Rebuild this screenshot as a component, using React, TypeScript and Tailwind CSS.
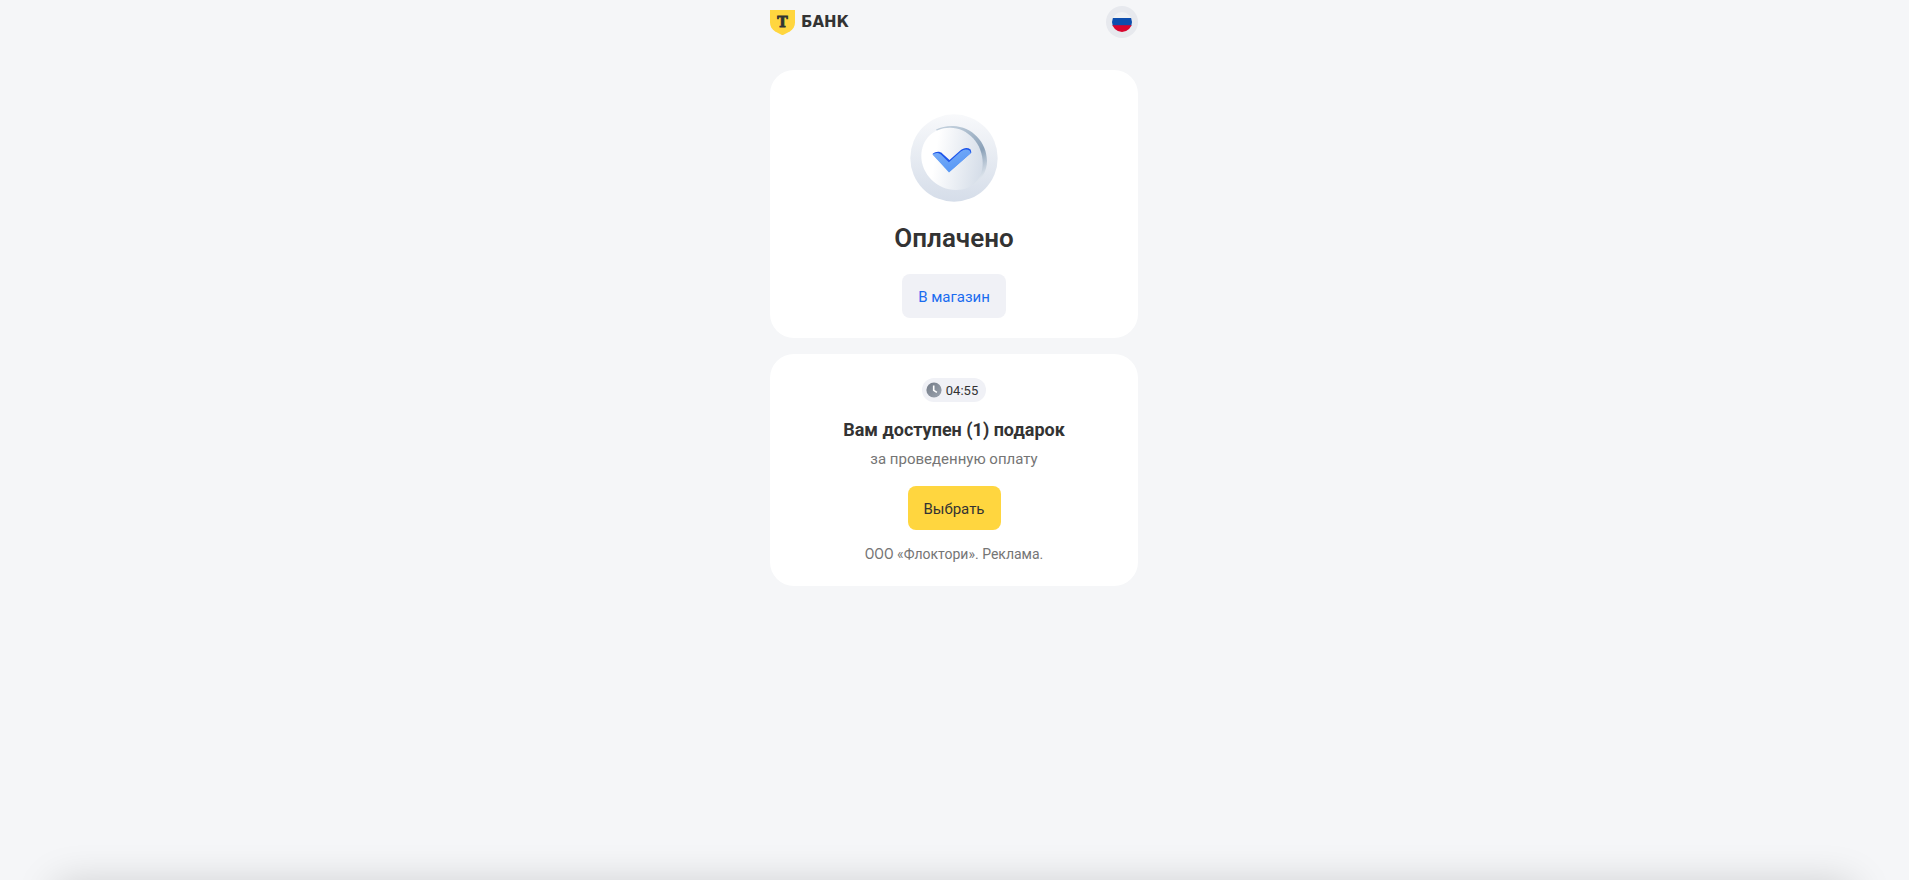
function Logo() {
  return (
    <a href="#" aria-label="Т-Банк" className="flex items-center gap-1.5 text-[#333333]">
      <svg viewBox="0 0 25 25" className="h-[25px] w-[25px]" aria-hidden="true">
        <path d="M0 0H25V12.6C25 16.3 23 19.7 19.8 21.5L12.5 25.3L5.2 21.5C2 19.7 0 16.3 0 12.6Z" fill="#FFD63F" />
        <text
          x="12.5"
          y="17"
          textAnchor="middle"
          fontFamily="'DejaVu Serif', serif"
          fontWeight="700"
          fontSize="14"
          fill="#333333"
          stroke="#333333"
          strokeWidth="0.8"
        >
          Т
        </text>
      </svg>
      <span className="font-['DejaVu_Sans',sans-serif] text-[15px] leading-5 font-black">БАНК</span>
    </a>
  );
}

function FlagIcon() {
  return (
    <svg viewBox="0 0 20 20" className="h-5 w-5" aria-hidden="true">
      <clipPath id="flag-round">
        <circle cx="10" cy="10" r="10" />
      </clipPath>
      <g clipPath="url(#flag-round)">
        <rect width="20" height="6" fill="#F0F1F3" />
        <rect y="6" width="20" height="8" fill="#0D4EAE" />
        <rect y="13.2" width="20" height="7" fill="#D8052E" />
      </g>
    </svg>
  );
}

function SuccessIcon() {
  return (
    <svg viewBox="0 0 88 88" className="h-[88px] w-[88px]" aria-hidden="true">
      <defs>
        <linearGradient id="ring" x1="0" y1="0" x2="0" y2="1">
          <stop offset="0" stopColor="#F8F9FB" />
          <stop offset="1" stopColor="#D5DDE9" />
        </linearGradient>
        <linearGradient id="rim" x1="0.2" y1="0" x2="0.75" y2="1">
          <stop offset="0.05" stopColor="#BFCDDA" />
          <stop offset="0.6" stopColor="#8BA1B8" />
          <stop offset="0.95" stopColor="#DDE4EC" />
        </linearGradient>
        <linearGradient id="disc" x1="0.1" y1="0.35" x2="1" y2="0.5">
          <stop offset="0.15" stopColor="#FFFFFF" />
          <stop offset="1" stopColor="#D6DEE9" />
        </linearGradient>
        <linearGradient id="tick" x1="0" y1="0" x2="0.6" y2="1">
          <stop offset="0" stopColor="#7DB0F8" />
          <stop offset="1" stopColor="#5596F5" />
        </linearGradient>
      </defs>
      <circle cx="44" cy="44" r="43.7" fill="url(#ring)" />
      <path d="M26 15.5C31 12.8 37 11.7 43 11.9C62 12.5 77 28 77 47C77 57.5 71.5 66.5 62.5 71.8Z" fill="url(#rim)" />
      <path d="M40 13.8C58 13.8 72.7 30 72.7 49C72.7 65 62 76 46 76C27 76 11.3 60 11.3 42C11.3 26 23 13.8 40 13.8Z" fill="url(#disc)" />
      <path d="M22.5 40C25.5 37.5 29.5 37 32.3 39.4L39.5 46L50 36.7C54 33.5 57.5 33.4 60.6 35.5L61.4 38.5L39.5 57.5Z" fill="#1D55EA" />
      <path d="M22.5 40.5C25.3 38.6 28.6 38.4 31.2 40.8L38.9 48.2L50.8 37.6C54.2 34.8 57 34.8 59.8 36.8L60.8 39.3L39 58.6Z" fill="url(#tick)" />
    </svg>
  );
}

function ClockIcon() {
  return (
    <svg viewBox="0 0 16 16" className="h-4 w-4" aria-hidden="true">
      <defs>
        <linearGradient id="clock" x1="0" y1="0" x2="1" y2="1">
          <stop offset="0" stopColor="#737B87" />
          <stop offset="1" stopColor="#9DA5B0" />
        </linearGradient>
      </defs>
      <circle cx="8" cy="8" r="7.6" fill="url(#clock)" />
      <path d="M7.7 3.6V8.3L10.9 10.4" fill="none" stroke="#FFFFFF" strokeWidth="1.6" />
    </svg>
  );
}

export default function App() {
  return (
    <div className="relative min-h-screen overflow-hidden bg-[#f5f6f8] pr-px font-[Roboto,sans-serif] text-[#333333]">
      <div className="mx-auto w-full max-w-[368px]">
        <header className="flex h-11 items-center justify-between">
          <Logo />
          <button
            type="button"
            aria-label="Язык: русский"
            className="flex h-8 w-8 items-center justify-center rounded-full bg-[#e7e9ee]"
          >
            <FlagIcon />
          </button>
        </header>

        <main className="flex flex-col gap-4 pt-[26px]">
          <section className="flex flex-col items-center rounded-3xl bg-white px-5 pt-11 pb-5">
            <SuccessIcon />
            <h1 className="mt-5 text-[26px] leading-8 font-semibold">Оплачено</h1>
            <a
              href="#"
              className="mt-5 flex h-11 items-center rounded-lg bg-[#f0f1f6] px-4 pt-0.5 text-[15px] leading-6 text-[#1a6cf0]"
            >
              В магазин
            </a>
          </section>

          <section className="flex flex-col items-center rounded-3xl bg-white px-5 py-6">
            <div className="flex h-6 items-center gap-1 rounded-full bg-[#f0f1f6] pr-2 pl-1">
              <ClockIcon />
              <time className="pt-0.5 text-[13px] leading-4">04:55</time>
            </div>
            <h2 className="mt-4 text-[18px] leading-6 font-bold">Вам доступен (1) подарок</h2>
            <p className="mt-1 text-[15px] leading-[26px] text-[#757575]">за проведенную оплату</p>
            <button
              type="button"
              className="mt-3.5 flex h-11 items-center rounded-lg bg-[#ffd63f] px-4 pt-0.5 text-[15px] leading-6"
            >
              Выбрать
            </button>
            <p className="mt-4 text-[14px] leading-4 text-[#757575]">ООО «Флоктори». Реклама.</p>
          </section>
        </main>
      </div>

      <div className="absolute inset-x-14 -bottom-11 h-10 shadow-[0_0_40px_rgba(0,0,0,0.18)]" aria-hidden="true" />
    </div>
  );
}
